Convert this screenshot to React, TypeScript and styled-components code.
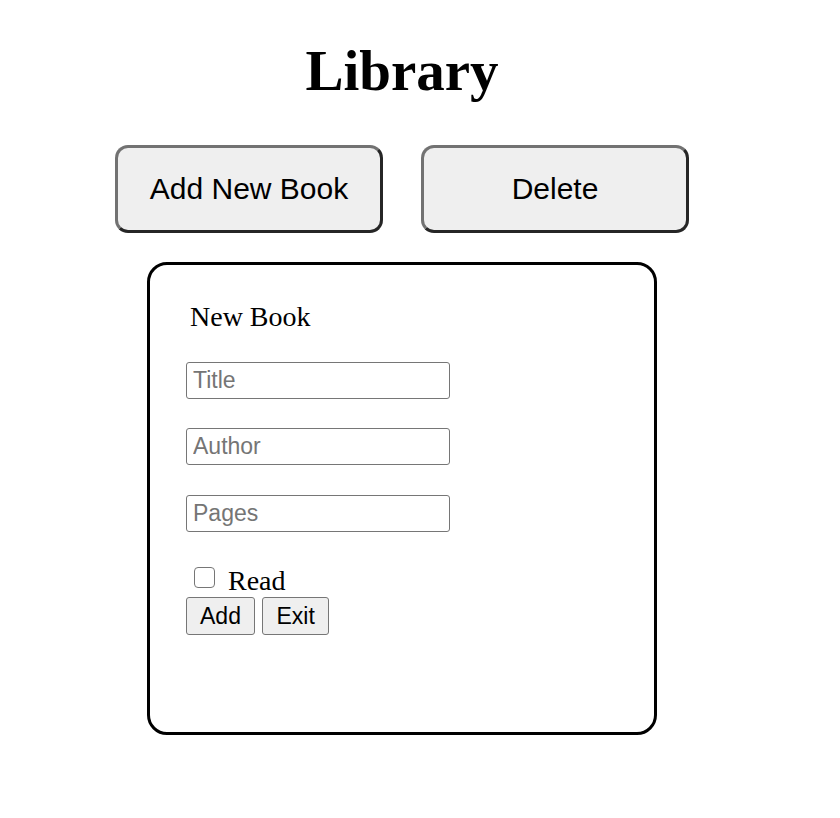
import React, { useState } from "react";
import styled, { createGlobalStyle } from "styled-components";

const GlobalStyle = createGlobalStyle`
  body {
    margin: 0;
    background: #fff;
    font-family: "Liberation Serif", "Times New Roman", serif;
    color: #000;
  }
`;

const Page = styled.div`
  width: 804px;
  display: flex;
  flex-direction: column;
  align-items: center;
`;

const Title = styled.h1`
  margin: 38px 0 0;
  font-size: 57px;
  line-height: 66px;
  font-weight: 700;
`;

const Toolbar = styled.div`
  display: flex;
  gap: 38px;
  margin-top: 41px;
`;

const BigButton = styled.button`
  width: 268px;
  height: 88px;
  font-family: "Liberation Sans", Arial, sans-serif;
  font-size: 30px;
  color: #000;
  background: #efefef;
  border: 3px solid;
  border-color: #727272 #262626 #262626 #727272;
  border-radius: 13px;
  cursor: pointer;
`;

const Card = styled.form`
  box-sizing: border-box;
  width: 510px;
  height: 473px;
  margin-top: 29px;
  padding: 0 36px;
  border: 3px solid #000;
  border-radius: 20px;
  display: flex;
  flex-direction: column;
  align-items: flex-start;
`;

const CardTitle = styled.div`
  margin: 36px 0 0 4px;
  font-size: 28px;
  line-height: 32px;
`;

const Fields = styled.div`
  display: flex;
  flex-direction: column;
  gap: 29.5px;
  margin-top: 28.5px;
`;

const Field = styled.input`
  box-sizing: border-box;
  width: 264px;
  height: 37px;
  padding: 0 6px;
  border: 1px solid #767676;
  border-radius: 3px;
  font-family: "Liberation Sans", Arial, sans-serif;
  font-size: 23px;
  outline: none;

  &::placeholder {
    color: #757575;
  }
`;

const CheckRow = styled.label`
  display: flex;
  align-items: flex-start;
  height: 32px;
  margin-top: 33.5px;
  font-size: 28px;
  line-height: 32px;
`;

const Check = styled.input`
  appearance: none;
  box-sizing: border-box;
  width: 21px;
  height: 21px;
  margin: 2px 13px 0 8px;
  border: 1.5px solid #767676;
  border-radius: 4px;
  background: #fff;

  &:checked {
    background: #0075ff;
    border-color: #0075ff;
  }
`;

const Actions = styled.div`
  display: flex;
  gap: 7.5px;
`;

const SmallButton = styled.button`
  height: 38px;
  padding: 0 13px;
  font-family: "Liberation Sans", Arial, sans-serif;
  font-size: 23px;
  color: #000;
  background: #efefef;
  border: 1px solid #767676;
  border-radius: 3px;
  cursor: pointer;
`;

const App = () => {
  const [read, setRead] = useState(false);

  return (
    <>
      <GlobalStyle />
      <Page>
        <Title>Library</Title>
        <Toolbar>
          <BigButton>Add New Book</BigButton>
          <BigButton>Delete</BigButton>
        </Toolbar>
        <Card onSubmit={(e) => e.preventDefault()}>
          <CardTitle>New Book</CardTitle>
          <Fields>
            <Field placeholder="Title" />
            <Field placeholder="Author" />
            <Field placeholder="Pages" />
          </Fields>
          <CheckRow>
            <Check
              type="checkbox"
              checked={read}
              onChange={() => setRead(!read)}
            />
            Read
          </CheckRow>
          <Actions>
            <SmallButton type="submit">Add</SmallButton>
            <SmallButton type="button">Exit</SmallButton>
          </Actions>
        </Card>
      </Page>
    </>
  );
};

export default App;
